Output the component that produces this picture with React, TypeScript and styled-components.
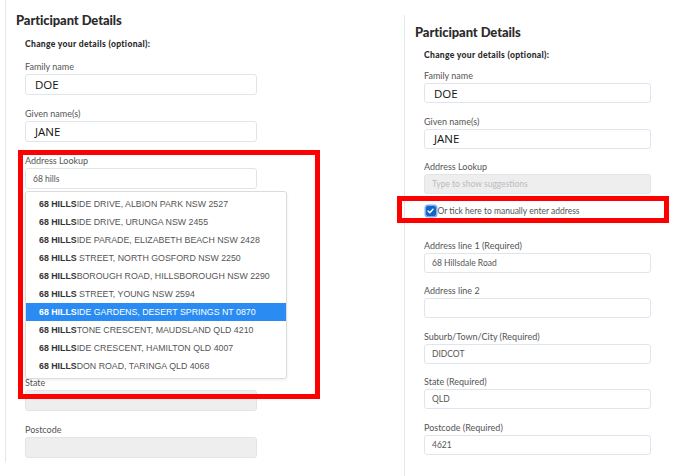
import styled, { createGlobalStyle } from "styled-components";

const GlobalStyle = createGlobalStyle`
  html, body {
    margin: 0;
    padding: 0;
    background: #fff;
  }
  body {
    font-family: "Lato", "Open Sans", sans-serif;
    color: #333;
  }
`;

const Page = styled.div`
  display: flex;
  align-items: flex-start;
  width: 683px;
  height: 476px;
  padding-left: 5px;
  box-sizing: border-box;
  overflow: hidden;
`;

const Panel = styled.section<{ $top: number; $width: number; $pad: number; $bottom: number }>`
  margin-top: ${(p) => p.$top}px;
  width: ${(p) => p.$width}px;
  height: ${(p) => p.$bottom - p.$top}px;
  border-left: 1px solid #e6e6e6;
  padding: ${(p) => p.$pad}px 0 0 10px;
  box-sizing: border-box;
  flex-shrink: 0;
`;

const Title = styled.h2`
  margin: 0;
  font-family: "Lato", sans-serif;
  font-weight: 900;
  font-size: 13px;
  line-height: 17px;
  color: #2b2b2b;
  letter-spacing: -0.1px;
`;

const Form = styled.div<{ $width: number }>`
  padding-left: 9px;
  width: ${(p) => p.$width}px;
`;

const SubTitle = styled.p<{ $mt: number; $mb: number }>`
  margin: ${(p) => p.$mt}px 0 ${(p) => p.$mb}px;
  font-family: "Lato", sans-serif;
  font-weight: 900;
  font-size: 8.6px;
  line-height: 11px;
  letter-spacing: 0.3px;
  color: #2b2b2b;
`;

const FieldBox = styled.div<{ $gap: number }>`
  position: relative;
  margin-bottom: ${(p) => p.$gap}px;
`;

const Label = styled.label`
  display: block;
  font-family: "Lato", sans-serif;
  font-size: 9px;
  line-height: 12px;
  color: #555;
  margin-bottom: 1px;
`;

const Input = styled.div<{ $h: number; $disabled?: boolean; $big?: boolean; $placeholder?: boolean }>`
  height: ${(p) => p.$h}px;
  box-sizing: border-box;
  border: 1px solid ${(p) => (p.$disabled ? "#e2e4e7" : "#dfe5ec")};
  border-radius: 3px;
  background: ${(p) => (p.$disabled ? "#eeeeee" : "#fff")};
  display: flex;
  align-items: center;
  padding-left: ${(p) => (p.$big ? 9 : 7)}px;
  font-family: ${(p) => (p.$big ? '"Open Sans", sans-serif' : '"Lato", sans-serif')};
  font-size: ${(p) => (p.$big ? 11.5 : 8.5)}px;
  color: ${(p) => (p.$placeholder ? "#b9bcc0" : p.$big ? "#111" : "#555")};
`;

const CheckRow = styled.div<{ $mb: number }>`
  position: relative;
  display: flex;
  align-items: center;
  height: 13px;
  margin: -2px 0 ${(p) => p.$mb}px;
`;

const CheckBox = styled.span<{ $checked?: boolean }>`
  width: 10px;
  height: 10px;
  border-radius: 2px;
  box-sizing: border-box;
  display: flex;
  align-items: center;
  justify-content: center;
  background: ${(p) => (p.$checked ? "#1565c8" : "#fff")};
  border: 1px solid ${(p) => (p.$checked ? "#1565c8" : "#adb4bb")};
  box-shadow: ${(p) => (p.$checked ? "0 0 0 1.5px #79aef0" : "none")};
  margin-left: 1.5px;
`;

const CheckText = styled.span`
  font-family: "Lato", sans-serif;
  font-size: 8.5px;
  color: #555;
  margin-left: 2px;
`;

const Highlight = styled.div<{ $l: number; $t: number; $w: number; $h: number }>`
  position: absolute;
  left: ${(p) => p.$l}px;
  top: ${(p) => p.$t}px;
  width: ${(p) => p.$w}px;
  height: ${(p) => p.$h}px;
  border: 5px solid #ff0000;
  box-sizing: border-box;
  pointer-events: none;
  z-index: 3;
`;

const Suggestions = styled.ul`
  position: absolute;
  left: 0;
  top: 36px;
  width: 262px;
  margin: 0;
  padding: 3px 0 3px;
  list-style: none;
  background: #fff;
  border: 1px solid #dcdcdc;
  border-radius: 3px;
  box-shadow: 0 1px 3px rgba(0, 0, 0, 0.08);
  box-sizing: border-box;
  z-index: 2;
`;

const Suggestion = styled.li<{ $active?: boolean }>`
  height: 18px;
  line-height: 18px;
  padding-left: 13px;
  font-family: "Liberation Sans", Arial, sans-serif;
  font-size: 8.8px;
  white-space: nowrap;
  color: ${(p) => (p.$active ? "#fff" : "#555")};
  background: ${(p) => (p.$active ? "#2a8cf2" : "transparent")};
  b {
    color: ${(p) => (p.$active ? "#fff" : "#333")};
  }
`;

const suggestions = [
  { bold: "68 HILLS", rest: "IDE DRIVE, ALBION PARK NSW 2527" },
  { bold: "68 HILLS", rest: "IDE DRIVE, URUNGA NSW 2455" },
  { bold: "68 HILLS", rest: "IDE PARADE, ELIZABETH BEACH NSW 2428" },
  { bold: "68 HILLS", rest: " STREET, NORTH GOSFORD NSW 2250" },
  { bold: "68 HILLS", rest: "BOROUGH ROAD, HILLSBOROUGH NSW 2290" },
  { bold: "68 HILLS", rest: " STREET, YOUNG NSW 2594" },
  { bold: "68 HILLS", rest: "IDE GARDENS, DESERT SPRINGS NT 0870", active: true },
  { bold: "68 HILLS", rest: "TONE CRESCENT, MAUDSLAND QLD 4210" },
  { bold: "68 HILLS", rest: "IDE CRESCENT, HAMILTON QLD 4007" },
  { bold: "68 HILLS", rest: "DON ROAD, TARINGA QLD 4068" },
];

interface FieldProps {
  label: string;
  value?: string;
  h: number;
  gap: number;
  disabled?: boolean;
  big?: boolean;
  placeholder?: string;
  children?: React.ReactNode;
}

function Field({ label, value, h, gap, disabled, big, placeholder, children }: FieldProps) {
  return (
    <FieldBox $gap={gap}>
      <Label>{label}</Label>
      <Input $h={h} $disabled={disabled} $big={big} $placeholder={!value && !!placeholder}>
        {value || placeholder}
      </Input>
      {children}
    </FieldBox>
  );
}

function Tick() {
  return (
    <svg width="7" height="6" viewBox="0 0 7 6">
      <path d="M1 3.1 L2.8 4.8 L6 1.2" fill="none" stroke="#fff" strokeWidth="1.4" strokeLinecap="round" strokeLinejoin="round" />
    </svg>
  );
}

export default function App() {
  // left screenshot is drawn a touch larger than the right one
  const L = { h: 21, gap: 13 };
  const R = { h: 20, gap: 12.5 };
  return (
    <>
      <GlobalStyle />
      <Page>
        <Panel $top={0} $bottom={462} $width={399} $pad={12}>
          <Title>Participant Details</Title>
          <Form $width={232}>
            <SubTitle $mt={10} $mb={11}>Change your details (optional):</SubTitle>
            <Field label="Family name" value="DOE" big {...L} />
            <Field label="Given name(s)" value="JANE" big {...L} />
            <Field label="Address Lookup" value="68 hills" {...L}>
              <Highlight $l={-7} $t={-5} $w={302} $h={249} />
              <Suggestions>
                {suggestions.map((s, i) => (
                  <Suggestion key={i} $active={s.active}>
                    <b>{s.bold}</b>
                    {s.rest}
                  </Suggestion>
                ))}
              </Suggestions>
            </Field>
            <CheckRow $mb={23}>
              <CheckBox />
              <CheckText>Or tick here to manually enter address</CheckText>
            </CheckRow>
            <Field label="Address line 1" disabled {...L} />
            <Field label="Address line 2" disabled {...L} />
            <Field label="Suburb/Town/City" disabled {...L} />
            <Field label="State" disabled {...L} />
            <Field label="Postcode" disabled {...L} />
          </Form>
        </Panel>
        <Panel $top={15} $bottom={476} $width={270} $pad={9}>
          <Title>Participant Details</Title>
          <Form $width={227}>
            <SubTitle $mt={9} $mb={9}>Change your details (optional):</SubTitle>
            <Field label="Family name" value="DOE" big {...R} />
            <Field label="Given name(s)" value="JANE" big {...R} />
            <Field label="Address Lookup" disabled placeholder="Type to show suggestions" {...R} />
            <CheckRow $mb={22}>
              <Highlight $l={-27} $t={-8.5} $w={272} $h={27} />
              <CheckBox $checked>
                <Tick />
              </CheckBox>
              <CheckText>Or tick here to manually enter address</CheckText>
            </CheckRow>
            <Field label="Address line 1 (Required)" value="68 Hillsdale Road" {...R} />
            <Field label="Address line 2" {...R} />
            <Field label="Suburb/Town/City (Required)" value="DIDCOT" {...R} />
            <Field label="State (Required)" value="QLD" {...R} />
            <Field label="Postcode (Required)" value="4621" {...R} />
          </Form>
        </Panel>
      </Page>
    </>
  );
}
